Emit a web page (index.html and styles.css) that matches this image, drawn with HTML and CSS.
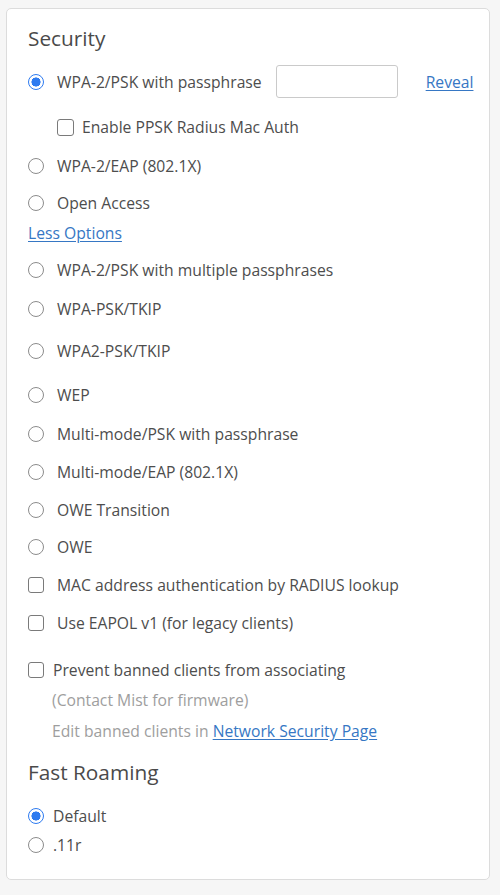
FILE: index.html
```html
<!DOCTYPE html>
<html lang="en">
<head>
<meta charset="utf-8">
<title>Security</title>
<link rel="stylesheet" href="styles.css">
</head>
<body>
<section class="card">
  <h2 class="title">Security</h2>

  <div class="row row-first">
    <label class="opt"><input type="radio" name="sec" class="radio" checked><span>WPA-2/PSK with passphrase</span></label>
    <input type="text" class="pass">
    <a href="#" class="link reveal">Reveal</a>
  </div>
  <div class="row sub mt-19">
    <label class="opt opt-sub"><input type="checkbox" class="check"><span>Enable PPSK Radius Mac Auth</span></label>
  </div>
  <div class="row mt-19"><label class="opt"><input type="radio" name="sec" class="radio"><span>WPA-2/EAP (802.1X)</span></label></div>
  <div class="row mt-17"><label class="opt"><input type="radio" name="sec" class="radio"><span>Open Access</span></label></div>
  <div class="row mt-10"><a href="#" class="link">Less Options</a></div>
  <div class="row mt-17"><label class="opt"><input type="radio" name="sec" class="radio"><span>WPA-2/PSK with multiple passphrases</span></label></div>
  <div class="row mt-19"><label class="opt"><input type="radio" name="sec" class="radio"><span>WPA-PSK/TKIP</span></label></div>
  <div class="row mt-22"><label class="opt"><input type="radio" name="sec" class="radio"><span>WPA2-PSK/TKIP</span></label></div>
  <div class="row mt-24"><label class="opt"><input type="radio" name="sec" class="radio"><span>WEP</span></label></div>
  <div class="row mt-19"><label class="opt"><input type="radio" name="sec" class="radio"><span>Multi-mode/PSK with passphrase</span></label></div>
  <div class="row mt-18"><label class="opt"><input type="radio" name="sec" class="radio"><span>Multi-mode/EAP (802.1X)</span></label></div>
  <div class="row mt-18"><label class="opt"><input type="radio" name="sec" class="radio"><span>OWE Transition</span></label></div>
  <div class="row mt-17"><label class="opt"><input type="radio" name="sec" class="radio"><span>OWE</span></label></div>
  <div class="row mt-18"><label class="opt"><input type="checkbox" class="check"><span>MAC address authentication by RADIUS lookup</span></label></div>
  <div class="row mt-18"><label class="opt"><input type="checkbox" class="check"><span>Use EAPOL v1 (for legacy clients)</span></label></div>
  <div class="row mt-27"><label class="opt opt-tight"><input type="checkbox" class="check"><span>Prevent banned clients from associating</span></label></div>
  <div class="row note mt-10">(Contact Mist for firmware)</div>
  <div class="row note mt-11">Edit banned clients in&nbsp;<a href="#" class="link">Network Security Page</a></div>

  <h2 class="title mt-19">Fast Roaming</h2>
  <div class="row mt-22"><label class="opt opt-tight"><input type="radio" name="roam" class="radio" checked><span>Default</span></label></div>
  <div class="row mt-9"><label class="opt opt-tight"><input type="radio" name="roam" class="radio"><span>.11r</span></label></div>
</section>
</body>
</html>
```

FILE: styles.css
```css
* { box-sizing: border-box; }

body {
  margin: 0;
  background: #f6f6f6;
  font-family: "Open Sans", "Noto Sans", sans-serif;
  color: #4d4d4d;
  font-size: 15.7px;
}

.card {
  margin: 8px 0 0 6px;
  width: 484px;
  height: 872px;
  background: #fff;
  border: 1px solid #dcdcdc;
  border-radius: 5px;
  padding: 17px 8px 0 21px;
  display: flex;
  flex-direction: column;
}

.title {
  margin: 0;
  font-size: 20.8px;
  line-height: 24px;
  font-weight: 400;
  color: #4a4a4a;
}

.row {
  display: flex;
  align-items: center;
  min-height: 20px;
  line-height: 20px;
  white-space: nowrap;
}

.row-first {
  margin-top: 15px;
  height: 33px;
}

.sub { padding-left: 29px; }

.opt {
  display: flex;
  align-items: center;
  gap: 13px;
  flex: none;
}
.opt-sub { gap: 8px; }
.opt-tight { gap: 9px; }

.radio, .check {
  -webkit-appearance: none;
  appearance: none;
  margin: 0;
  flex: none;
  width: 16px;
  height: 16px;
  border: 1px solid #8c8c8c;
  background: #fff;
}

.radio {
  border-radius: 50%;
}
.radio:checked {
  border: 1.5px solid #2e7bf0;
  background: radial-gradient(circle, #2e7bf0 0 4.3px, #fff 4.8px);
}

.check {
  border-radius: 3px;
  border-width: 1.3px;
  border-color: #7a7a7a;
}
.opt-sub .check { width: 17px; height: 17px; }

.pass {
  flex: none;
  margin-left: 14px;
  width: 122px;
  height: 33px;
  border: 1px solid #cacaca;
  border-radius: 3px;
  background: #fff;
  font: inherit;
}

.reveal { margin-left: 28px; flex: none; }

.link {
  color: #3677c4;
  text-decoration: underline;
  text-underline-offset: 2px;
}

.note {
  color: #9e9e9e;
  padding-left: 24px;
}

.mt-9 { margin-top: 9px; }
.mt-10 { margin-top: 10px; }
.mt-11 { margin-top: 11px; }
.mt-12 { margin-top: 12px; }
.mt-17 { margin-top: 17px; }
.mt-18 { margin-top: 18px; }
.mt-19 { margin-top: 19px; }
.mt-20 { margin-top: 20px; }
.mt-22 { margin-top: 22px; }
.mt-24 { margin-top: 24px; }
.mt-26 { margin-top: 26px; }
.mt-27 { margin-top: 27px; }
```
